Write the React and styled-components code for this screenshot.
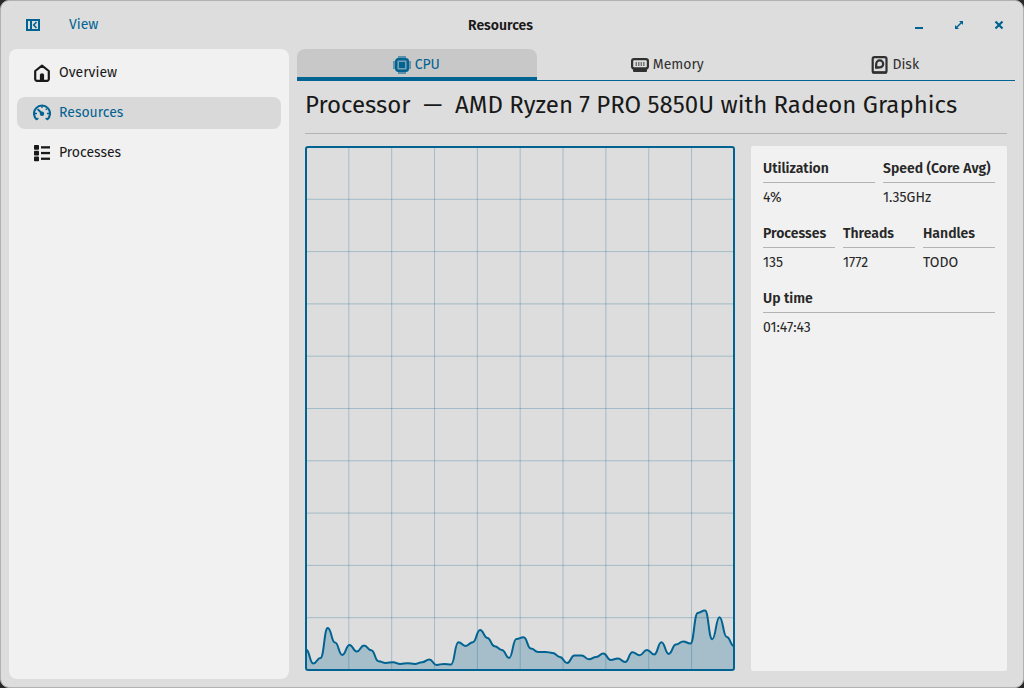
import React from "react";
import styled, { createGlobalStyle } from "styled-components";

const accent = "#006391";

const GlobalStyle = createGlobalStyle`
  * { box-sizing: border-box; }
  body { margin: 0; background: #28282b; overflow: hidden; }
`;

const Window = styled.div`
  display: flex;
  flex-direction: column;
  width: 1024px;
  height: 688px;
  padding: 0 8px 8px;
  border: 1px solid #b1b1b1;
  border-radius: 9px;
  background: #dddddd;
  color: #191919;
  font-family: "Fira Sans", "Noto Sans", sans-serif;
  font-size: 14px;
  line-height: 20px;
`;

const Text = styled.span`
  display: block;
  white-space: nowrap;
`;

const HeaderBar = styled.header`
  display: grid;
  grid-template-columns: 1fr auto 1fr;
  align-items: center;
  height: 48px;
  color: ${accent};
`;

const HeaderStart = styled.div`
  display: flex;
  align-items: center;
  gap: 29px;
  padding-left: 17px;
`;

const HeaderTitle = styled.h1`
  margin: 0;
  padding: 2px 23px 0 0;
  color: #191919;
  font-size: 14px;
  line-height: 20px;
  font-weight: 600;
`;

const WindowButtons = styled.div`
  display: flex;
  justify-content: flex-end;
  gap: 28px;
  padding-right: 10px;
`;

const Body = styled.div`
  display: flex;
  gap: 8px;
  flex: 1;
  min-height: 0;
`;

const Sidebar = styled.nav`
  display: flex;
  flex-direction: column;
  gap: 8px;
  width: 280px;
  padding: 8px;
  border-radius: 8px;
  background: #f1f1f1;
`;

const NavItem = styled.div`
  display: flex;
  align-items: center;
  gap: 8px;
  height: 32px;
  padding: 0 16px;
  border-radius: 8px;
  background: ${(p) => (p.$active ? "#d9d9d9" : "transparent")};
  color: ${(p) => (p.$active ? accent : "#191919")};
  ${Text} { margin-top: -1px; }
`;

const Main = styled.main`
  display: flex;
  flex-direction: column;
  width: 718px;
`;

const TabBar = styled.div`
  display: grid;
  grid-template-columns: 240px 239px 239px;
  height: 32px;
  background: linear-gradient(${accent}, ${accent}) bottom / 100% 1px no-repeat;
`;

const Tab = styled.div`
  display: flex;
  align-items: center;
  justify-content: center;
  gap: 4px;
  height: 32px;
  padding-left: ${(p) => p.$indent || 0}px;
  padding-right: 1.5px;
  border-radius: 8px 8px 0 0;
  background: ${(p) =>
    p.$active ? `linear-gradient(#c8c8c8 28px, ${accent} 28px)` : "none"};
  color: ${(p) => (p.$active ? accent : "#303030")};
  ${Text} { margin-top: -1px; }
`;

const Page = styled.section`
  display: flex;
  flex-direction: column;
  flex: 1;
  min-height: 0;
  padding: 0 8px 8px;
`;

const Heading = styled.h2`
  display: flex;
  height: 53px;
  margin: 0;
  padding-top: 8px;
  border-bottom: 1px solid #b3b3b3;
  font-size: 24px;
  line-height: 32px;
  font-weight: 400;
  white-space: pre;
`;

const Content = styled.div`
  display: flex;
  gap: 16px;
  flex: 1;
  min-height: 0;
  margin-top: 12px;
`;

const GraphFrame = styled.div`
  width: 430px;
  border: 2px solid ${accent};
  border-radius: 3px;
  overflow: hidden;
  svg { display: block; }
`;

const Stats = styled.aside`
  display: flex;
  flex-direction: column;
  gap: 10px;
  width: 256px;
  padding: 12px;
  border-radius: 2px;
  background: #f1f1f1;
  color: #272727;
`;

const StatRow = styled.div`
  display: grid;
  grid-template-columns: repeat(${(p) => p.$columns}, 1fr);
  gap: 8px;
`;

const Stat = styled.div`
  height: 55px;
`;

const StatName = styled.div`
  height: 25px;
  padding-top: 1px;
  border-bottom: 1px solid #b3b3b3;
  font-weight: 600;
`;

const StatValue = styled.div`
  padding-top: 5px;
`;

const svgProps = { fill: "none", stroke: "currentColor" };

const PanelIcon = () => (
  <svg width="14" height="12" viewBox="0 0 14 12" {...svgProps}>
    <path d="M1 1h12v10H1z" strokeWidth="2" />
    <path d="M5 1v10" strokeWidth="2" />
    <path d="M10.5 3 7.7 6l2.8 3" strokeWidth="1.6" />
  </svg>
);

const HomeIcon = () => (
  <svg width="18" height="18" viewBox="0 0 18 18" {...svgProps}>
    <path d="M2.2 7 9 1.7 15.8 7v8a1.8 1.8 0 0 1-1.8 1.8H4A1.8 1.8 0 0 1 2.2 15z" strokeWidth="2.2" strokeLinejoin="round" />
    <path d="M6.9 17v-6.2q0-1.6 2.1-1.6t2.1 1.6V17z" fill="currentColor" stroke="none" />
  </svg>
);

const GaugeIcon = () => (
  <svg width="18" height="18" viewBox="0 0 18 18" {...svgProps}>
    <path d="M4 15.8A8 8 0 1 1 14 15.8" strokeWidth="2.1" />
    <path d="M4 15.6 5.3 14M14 15.6 12.7 14M2 9.5h2M16 9.5h-2M9 2v2M13.8 4.7l-1 1" strokeWidth="1.3" />
    <path d="M4.6 5.1 9 9.5" strokeWidth="2" />
    <circle cx="9" cy="9.8" r="2.2" fill="currentColor" stroke="none" />
  </svg>
);

const ListIcon = () => (
  <svg width="18" height="18" viewBox="0 0 18 18" fill="currentColor">
    {[1, 6.7, 12.4].map((y) => (
      <g key={y}>
        <rect x="1" y={y} width="5" height="4.8" rx="0.8" />
        <rect x="8" y={y + 1.2} width="9" height="2.3" />
      </g>
    ))}
  </svg>
);

const CpuIcon = () => (
  <svg width="18" height="18" viewBox="0 0 18 18" {...svgProps}>
    <path d="M6 0v18M8 0v18M10 0v18M12 0v18M0 6h18M0 8h18M0 10h18M0 12h18" strokeWidth="1.1" />
    <rect x="3.2" y="3.2" width="11.6" height="11.6" rx="2" fill="#7aa0b3" strokeWidth="2.4" />
    <rect x="6" y="6" width="6" height="6" fill="currentColor" stroke="none" />
  </svg>
);

const MemoryIcon = () => (
  <svg width="18" height="18" viewBox="0 0 18 18" {...svgProps}>
    <rect x="1.1" y="3.1" width="15.8" height="9.4" rx="2" strokeWidth="2.2" />
    <path d="M2 11.5h14v3.5q0 1-1 1H3q-1 0-1-1z" fill="currentColor" stroke="none" />
    <path d="M5.3 6v4M7.8 6v4M10.3 6v4M12.8 6v4" strokeWidth="1.5" opacity=".6" />
  </svg>
);

const DiskIcon = () => (
  <svg width="18" height="18" viewBox="0 0 18 18" {...svgProps}>
    <g transform="translate(.6 0)">
      <rect x="2.1" y="1.1" width="13.8" height="15.6" rx="1.8" strokeWidth="2.2" />
      <path d="M2 15.3h14v2.2H2z" fill="currentColor" stroke="none" />
      <path d="M5.6 11.4V7.9A3.5 3.5 0 1 1 9.1 11.4z" strokeWidth="2.2" />
      <path d="M4.6 12.6v-4l4 4z" fill="currentColor" stroke="none" />
    </g>
  </svg>
);

const WindowIcon = ({ children }) => (
  <svg width="12" height="12" viewBox="0 0 12 12" {...svgProps}>{children}</svg>
);

// Load history, as the height of each sample above the chart's base line.
const samples = [
  20.7, 6.7, 12.3, 42.3, 27.7, 15.3, 25.3, 18.7, 24.7, 20, 9, 7.3, 8, 6.3, 7, 6.3, 8,
  10.7, 5.3, 6.3, 5.8, 28, 24.3, 28, 40.3, 32.3, 24, 20.3, 12.3, 31.3, 33, 21.7, 18.3,
  18.3, 17.3, 13.3, 7.3, 14.7, 14.7, 11, 13.3, 16.7, 10.3, 11.7, 8.3, 18, 15, 20.3,
  15.7, 28, 16.3, 25.7, 28.7, 26.7, 57.3, 59.7, 31, 53, 33.3, 24,
];

const CHART_W = 426;
const CHART_H = 521;

const step = 428 / (samples.length - 1);
const px = (i) => -1 + i * step;
const py = (v) => 522.2 - v;
const curve = samples
  .slice(1)
  .map((v, i) => {
    const mid = px(i) + step / 2;
    return `C${mid} ${py(samples[i])} ${mid} ${py(v)} ${px(i + 1)} ${py(v)}`;
  })
  .join("");
const line = `M${px(0)} ${py(samples[0])}${curve}`;

const Chart = () => (
  <svg width={CHART_W} height={CHART_H} viewBox={`0 0 ${CHART_W} ${CHART_H}`}>
    <g stroke={accent} strokeOpacity="0.27" strokeWidth="1">
      {[1, 2, 3, 4, 5, 6, 7, 8, 9].map((n) => (
        <React.Fragment key={n}>
          <path d={`M${n * 42.84 - 1} 0V521`} />
          <path d={`M0 ${n * 52.3 - 1}H426`} />
        </React.Fragment>
      ))}
    </g>
    <path d={`${line}V523H-1Z`} fill={accent} fillOpacity="0.25" />
    <path d={line} fill="none" stroke={accent} strokeWidth="2" />
  </svg>
);

const navItems = [
  { name: "Overview", Icon: HomeIcon },
  { name: "Resources", Icon: GaugeIcon, active: true },
  { name: "Processes", Icon: ListIcon },
];

const tabs = [
  { name: "CPU", Icon: CpuIcon, active: true },
  { name: "Memory", Icon: MemoryIcon, indent: 23 },
  { name: "Disk", Icon: DiskIcon },
];

const statRows = [
  [["Utilization", "4%"], ["Speed (Core Avg)", "1.35GHz"]],
  [["Processes", "135"], ["Threads", "1772"], ["Handles", "TODO"]],
  [["Up time", "01:47:43"]],
];

export default function App() {
  return (
    <>
      <GlobalStyle />
      <Window>
        <HeaderBar>
          <HeaderStart>
            <PanelIcon />
            <Text>View</Text>
          </HeaderStart>
          <HeaderTitle>Resources</HeaderTitle>
          <WindowButtons>
            <WindowIcon><path d="M2 9h8" strokeWidth="2" /></WindowIcon>
            <WindowIcon>
              <path d="M3 9 9 3" strokeWidth="1.4" />
              <path d="M6 2h4v4zM2 6v4h4z" fill="currentColor" stroke="none" />
            </WindowIcon>
            <WindowIcon><path d="m2.5 2.5 7 7m0-7-7 7" strokeWidth="2.2" /></WindowIcon>
          </WindowButtons>
        </HeaderBar>
        <Body>
          <Sidebar>
            {navItems.map(({ name, Icon, active }) => (
              <NavItem key={name} $active={active}>
                <Icon />
                <Text>{name}</Text>
              </NavItem>
            ))}
          </Sidebar>
          <Main>
            <TabBar>
              {tabs.map(({ name, Icon, indent, active }) => (
                <Tab key={name} $active={active} $indent={indent}>
                  <Icon />
                  <Text>{name}</Text>
                </Tab>
              ))}
            </TabBar>
            <Page>
              <Heading>{"Processor  —  AMD Ryzen 7 PRO 5850U with Radeon Graphics"}</Heading>
              <Content>
                <GraphFrame><Chart /></GraphFrame>
                <Stats>
                  {statRows.map((row) => (
                    <StatRow key={row[0][0]} $columns={row.length}>
                      {row.map(([name, value]) => (
                        <Stat key={name}>
                          <StatName>{name}</StatName>
                          <StatValue>{value}</StatValue>
                        </Stat>
                      ))}
                    </StatRow>
                  ))}
                </Stats>
              </Content>
            </Page>
          </Main>
        </Body>
      </Window>
    </>
  );
}
